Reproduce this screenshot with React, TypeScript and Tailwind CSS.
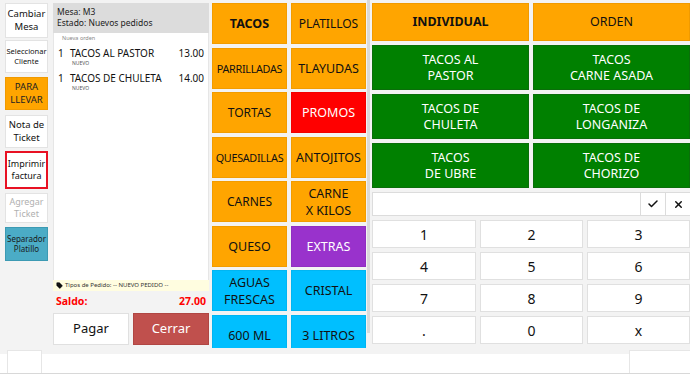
import React from "react";
import { Check, X, Tag } from "lucide-react";

const F = { fontFamily: '"Noto Sans", "Open Sans", sans-serif' };

const leftBtns = [
  { l: ["Cambiar", "Mesa"], c: "bg-white border border-[#e3e3e3] text-[#111] text-[9.5px] h-[35px]" },
  { l: ["Seleccionar", "Cliente"], c: "bg-white border border-[#e3e3e3] text-[#111] text-[7.5px] h-[33px] mt-[2px]" },
  { l: ["PARA", "LLEVAR"], c: "bg-[#ffa500] border border-[#f09a00] text-[#222] text-[9.5px] h-[33px] mt-[4px]" },
  { l: ["Nota de", "Ticket"], c: "bg-white border border-[#e3e3e3] text-[#111] text-[9.5px] h-[33px] mt-[5px]" },
  { l: ["Imprimir", "factura"], c: "bg-white border-2 border-[#e81123] text-[#111] text-[9px] h-[38px] mt-[3px]" },
  { l: ["Agregar", "Ticket"], c: "bg-white border border-[#e3e3e3] text-[#b0b0b0] text-[9px] h-[30px] mt-[4px]" },
  { l: ["Separador", "Platillo"], c: "bg-[#4bacc6] border border-[#3c9ab3] text-[#1a1a1a] text-[8px] h-[34px] mt-[4px]" },
];

const cats: { t: string[]; c: string; s?: string }[] = [
  { t: ["TACOS"], c: "bg-[#ffa500] text-[#111] font-bold", s: "text-[12.5px]" },
  { t: ["PLATILLOS"], c: "bg-[#ffa500] text-[#111]", s: "text-[12px]" },
  { t: ["PARRILLADAS"], c: "bg-[#ffa500] text-[#111]", s: "text-[10.8px] tracking-[-0.3px]" },
  { t: ["TLAYUDAS"], c: "bg-[#ffa500] text-[#111]", s: "text-[12.5px]" },
  { t: ["TORTAS"], c: "bg-[#ffa500] text-[#111]", s: "text-[12px]" },
  { t: ["PROMOS"], c: "bg-[#ff0000] text-white", s: "text-[12.5px]" },
  { t: ["QUESADILLAS"], c: "bg-[#ffa500] text-[#111]", s: "text-[10.8px] tracking-[-0.3px]" },
  { t: ["ANTOJITOS"], c: "bg-[#ffa500] text-[#111]", s: "text-[12.5px]" },
  { t: ["CARNES"], c: "bg-[#ffa500] text-[#111]", s: "text-[12px]" },
  { t: ["CARNE", "X KILOS"], c: "bg-[#ffa500] text-[#111]", s: "text-[12.5px]" },
  { t: ["QUESO"], c: "bg-[#ffa500] text-[#111]", s: "text-[12.5px]" },
  { t: ["EXTRAS"], c: "bg-[#9932cc] text-white", s: "text-[12.5px]" },
  { t: ["AGUAS", "FRESCAS"], c: "bg-[#00bfff] text-[#111]", s: "text-[12.5px]" },
  { t: ["CRISTAL"], c: "bg-[#00bfff] text-[#111]", s: "text-[12.5px]" },
  { t: ["600 ML"], c: "bg-[#00bfff] text-[#111]", s: "text-[12.5px]" },
  { t: ["3 LITROS"], c: "bg-[#00bfff] text-[#111]", s: "text-[12.5px]" },
];

const prods = [
  ["TACOS AL", "PASTOR"],
  ["TACOS", "CARNE ASADA"],
  ["TACOS DE", "CHULETA"],
  ["TACOS DE", "LONGANIZA"],
  ["TACOS", "DE UBRE"],
  ["TACOS DE", "CHORIZO"],
];

const keys = ["1", "2", "3", "4", "5", "6", "7", "8", "9", ".", "0", "x"];

export default function App() {
  return (
    <div className="w-[690px] h-[375px] overflow-hidden bg-white" style={F}>
      <div className="h-[354px] bg-[#f3f3f3] flex overflow-hidden">
        {/* left buttons */}
        <div className="w-[43px] ml-[5px] mt-[3px] flex flex-col shrink-0">
          {leftBtns.map((b, i) => (
            <div key={i} className={`flex flex-col items-center justify-center leading-[1.3] ${b.c}`}>
              {b.l.map((x, j) => (
                <span key={j} className="whitespace-nowrap">{x}</span>
              ))}
            </div>
          ))}
        </div>

        {/* order panel */}
        <div className="w-[156px] ml-[5px] mt-[3px] flex flex-col shrink-0">
          <div className="h-[30px] bg-[#dcdcdc] px-[4px] pt-[3px] text-[8.5px] leading-[11px] text-[#222]">
            <div>Mesa: M3</div>
            <div>Estado: Nuevos pedidos</div>
          </div>
          <div className="h-[247px] bg-white border-x border-[#e6e6e6]">
            <div className="text-[5.5px] text-[#888] pl-[8px] pt-[1px] leading-[8px]">Nueva orden</div>
            {[
              ["TACOS AL PASTOR", "13.00"],
              ["TACOS DE CHULETA", "14.00"],
            ].map(([n, p], i) => (
              <div key={i} className={`${i === 0 ? "mt-[5px]" : "mt-[6px]"} pr-[4px]`}>
                <div className="flex text-[10px] leading-[13px] text-[#111]">
                  <span className="w-[12px] pl-[4px]">1</span>
                  <span className="ml-[4px] flex-1">{n}</span>
                  <span>{p}</span>
                </div>
                <div className="text-[5px] leading-[6px] text-[#555] pl-[18px]">NUEVO</div>
              </div>
            ))}
          </div>
          <div className="h-[11px] bg-[#fffde0] flex items-center pl-[3px] gap-[2px] text-[6px] text-[#333]">
            <Tag size={7} fill="#111" strokeWidth={1} />
            <span>Tipos de Pedido: -- NUEVO PEDIDO --</span>
          </div>
          <div className="h-[22px] flex items-center justify-between px-[3px] text-[10.5px] font-bold text-[#ff0000]">
            <span>Saldo:</span>
            <span>27.00</span>
          </div>
          <div className="flex gap-[4px] h-[32px]">
            <div className="flex-1 bg-white border border-[#e0e0e0] flex items-center justify-center text-[13px] text-[#111]">
              Pagar
            </div>
            <div className="flex-1 bg-[#c0504d] border border-[#b04643] flex items-center justify-center text-[13px] text-white">
              Cerrar
            </div>
          </div>
        </div>

        {/* categories */}
        <div className="w-[154px] ml-[3px] mt-[3px] h-[345px] overflow-hidden shrink-0">
          <div className="grid grid-cols-[75px_75px] gap-x-[4px] gap-y-[3.5px] auto-rows-[41px]">
            {cats.map((c, i) => (
              <div
                key={i}
                className={`flex flex-col items-center justify-center leading-[17px] border border-black/5 ${c.c} ${c.s}`}
              >
                {c.t.map((x, j) => (
                  <span key={j} className="whitespace-nowrap">{x}</span>
                ))}
              </div>
            ))}
          </div>
        </div>
        <div className="w-[3px] ml-[1px] h-[333px] bg-[#dadada] shrink-0" />

        {/* right panel */}
        <div className="ml-[2px] mt-[3px] w-[322px] shrink-0 flex flex-col">
          <div className="grid grid-cols-[157px_157px] gap-x-[4px]">
            <div className="h-[38px] bg-[#ffa500] border border-[#f09a00] flex items-center justify-center text-[12.5px] font-bold text-[#111]">
              INDIVIDUAL
            </div>
            <div className="h-[38px] bg-[#ffa500] border border-[#f09a00] flex items-center justify-center text-[12.5px] text-[#111]">
              ORDEN
            </div>
          </div>
          <div className="grid grid-cols-[157px_157px] gap-x-[4px] gap-y-[4px] auto-rows-[45px] mt-[4px]">
            {prods.map((p, i) => (
              <div
                key={i}
                className="bg-[#008000] border border-[#0a6e0a] flex flex-col items-center justify-center text-white text-[12.5px] leading-[16px]"
              >
                {p.map((x, j) => (
                  <span key={j} className="whitespace-nowrap">{x}</span>
                ))}
              </div>
            ))}
          </div>
          <div className="flex h-[24px] mt-[4px]">
            <div className="w-[269px] bg-white border border-[#dcdcdc]" />
            <div className="w-[25px] bg-white border-y border-r border-[#dcdcdc] flex items-center justify-center">
              <Check size={12} strokeWidth={3} color="#111" />
            </div>
            <div className="w-[25px] bg-white border-y border-r border-[#dcdcdc] flex items-center justify-center">
              <X size={11} strokeWidth={3.2} color="#111" />
            </div>
          </div>
          <div className="grid grid-cols-[104px_103px_103px] gap-x-[4px] gap-y-[4px] auto-rows-[28px] mt-[4px]">
            {keys.map((k) => (
              <div
                key={k}
                className="bg-white border border-[#e0e0e0] flex items-center justify-center text-[14px] text-[#111]"
              >
                {k}
              </div>
            ))}
          </div>
        </div>
      </div>

      {/* bottom strip */}
      <div className="relative h-[21px] bg-white">
        <div className="absolute left-[7px] top-[-4px] w-[35px] h-[23px] bg-white border-x border-t border-[#e6e6e6]" />
        <div className="absolute left-[629px] top-[-4px] w-[61px] h-[23px] bg-white border-l border-t border-[#e6e6e6]" />
        <div className="absolute left-0 top-[19px] w-full h-[2px] border-t border-[#d8d8d8]" />
      </div>
    </div>
  );
}
